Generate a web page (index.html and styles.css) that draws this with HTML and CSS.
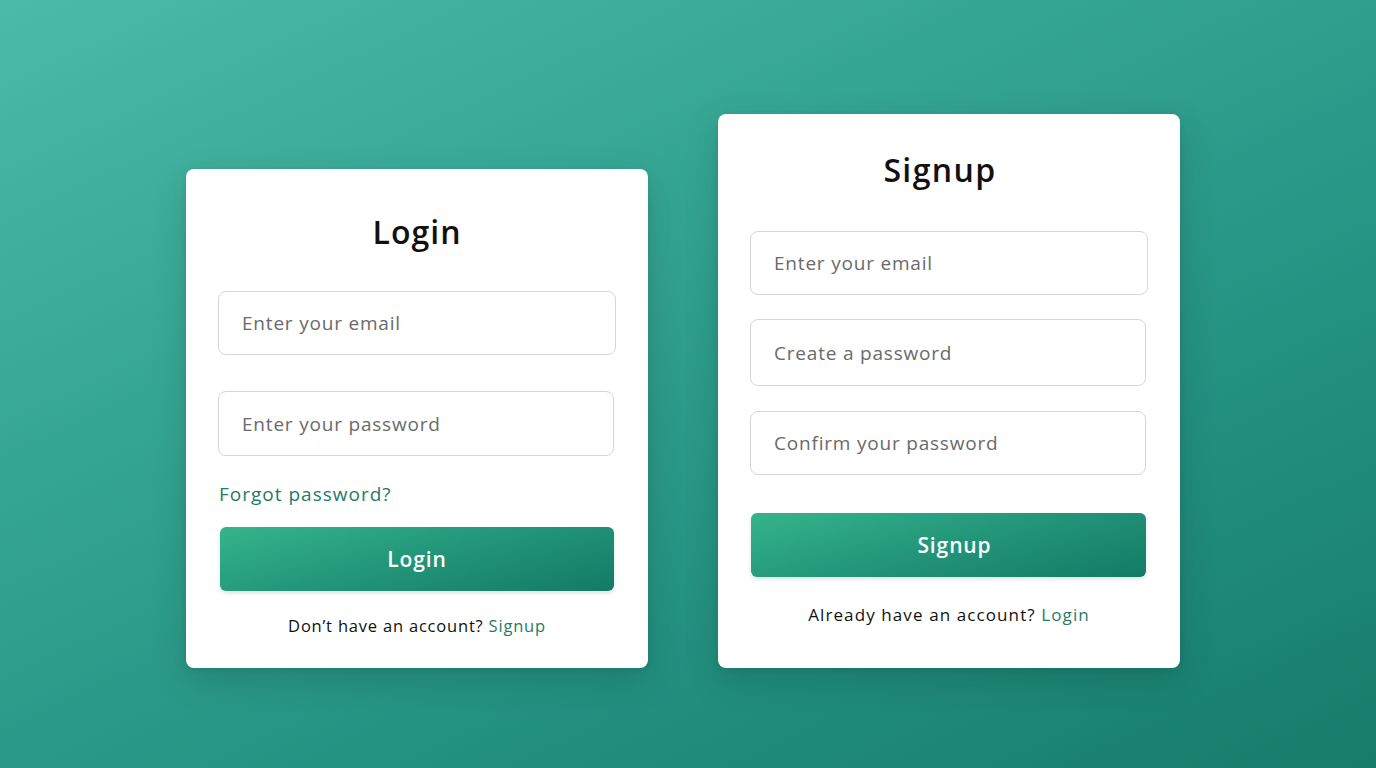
FILE: index.html
```html
<!DOCTYPE html>
<html lang="en">
<head>
<meta charset="utf-8">
<title>Login / Signup</title>
<link rel="stylesheet" href="styles.css">
</head>
<body>
<main class="stage">
  <section class="card card-login">
    <h1 class="title">Login</h1>
    <input class="field" type="email" placeholder="Enter your email">
    <input class="field field-gap field-narrow" type="password" placeholder="Enter your password">
    <a class="forgot" href="#">Forgot password?</a>
    <button class="btn btn-login" type="button">Login</button>
    <p class="foot foot-login">Don’t have an account? <a href="#">Signup</a></p>
  </section>
  <section class="card card-signup">
    <h1 class="title">Signup</h1>
    <input class="field" type="email" placeholder="Enter your email">
    <input class="field field-tall field-narrow s-gap1" type="password" placeholder="Create a password">
    <input class="field field-narrow s-gap2" type="password" placeholder="Confirm your password">
    <button class="btn btn-signup" type="button">Signup</button>
    <p class="foot foot-signup">Already have an account? <a href="#">Login</a></p>
  </section>
</main>
</body>
</html>
```

FILE: styles.css
```css
* { box-sizing: border-box; }
html, body { margin: 0; padding: 0; }
body {
  width: 1376px;
  height: 768px;
  overflow: hidden;
  font-family: "Open Sans", "Noto Sans", sans-serif;
  background: linear-gradient(155deg, #4bbaa6 0%, #35a593 35%, #259282 65%, #177c6a 100%);
}
.stage {
  height: 768px;
  display: flex;
  justify-content: center;
  align-items: flex-end;
  gap: 70px;
  padding: 0 10px 100px 0;
}
.card {
  width: 462px;
  background: #fff;
  border-radius: 8px;
  box-shadow: 0 12px 34px rgba(0, 40, 30, 0.18), 0 2px 6px rgba(0, 40, 30, 0.08);
  display: flex;
  flex-direction: column;
  padding: 0 32px;
}
.card-login { padding-top: 41px; padding-bottom: 30px; }
.card-signup { padding-top: 34px; padding-bottom: 41px; }
.title {
  margin: 0;
  height: 44px;
  line-height: 44px;
  text-align: center;
  font-size: 32px;
  font-weight: 600;
  color: #111;
  letter-spacing: 1px;
}
.card-login .title { margin-bottom: 37px; }
.card-signup .title { margin-bottom: 39px; letter-spacing: 1.4px; padding-right: 18px; }
.field {
  display: block;
  width: 398px;
  height: 64px;
  border: 1.5px solid #d6d6d6;
  border-radius: 8px;
  padding: 0 23px;
  font-family: inherit;
  font-size: 19px;
  letter-spacing: 0.8px;
  color: #333;
  background: #fff;
  outline: none;
}
.field::placeholder { color: #6a6a6a; }
.field-narrow { width: 396px; }
.field-gap { margin-top: 36px; height: 65px; }
.field-tall { height: 67px; }
.s-gap1 { margin-top: 24px; }
.s-gap2 { margin-top: 25px; }
.forgot {
  margin-top: 26px;
  height: 24px;
  line-height: 24px;
  font-size: 19px;
  letter-spacing: 1px;
  color: #1f7b67;
  text-decoration: none;
  align-self: flex-start;
  padding-left: 1px;
}
.btn {
  display: block;
  height: 64px;
  margin: 0 2px;
  width: 394px;
  border: none;
  border-radius: 6px;
  background: linear-gradient(165deg, #35b48c 0%, #24987b 45%, #147a66 100%);
  color: #fff;
  font-family: inherit;
  font-size: 21px;
  letter-spacing: 0.9px;
  font-weight: 600;
  box-shadow: 0 2px 4px rgba(0, 60, 45, 0.15);
}
.btn-login { margin-top: 21px; }
.btn-signup { margin-top: 38px; margin-left: 1px; width: 395px; padding-left: 18px; }
.foot {
  margin: 0;
  height: 24px;
  line-height: 24px;
  text-align: center;
  color: #111;
}
.foot a { color: #1f7b67; text-decoration: none; }
.foot-login { margin-top: 23px; font-size: 16.5px; letter-spacing: 0.8px; }
.foot-signup { margin-top: 26px; font-size: 17px; letter-spacing: 1.1px; }
```
